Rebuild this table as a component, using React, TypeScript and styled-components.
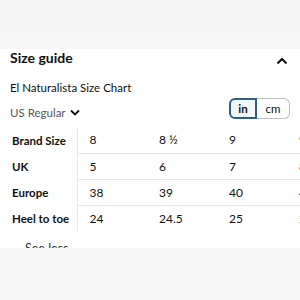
import styled, { createGlobalStyle } from "styled-components";

const GlobalStyle = createGlobalStyle`
  html, body {
    margin: 0;
    padding: 0;
    background: #f6f6f6;
  }
  body {
    font-family: Lato, "Liberation Sans", Arial, sans-serif;
    color: #0f1111;
  }
`;

const Page = styled.div`
  width: 300px;
  height: 300px;
  display: flex;
  flex-direction: column;
  background: #f6f6f6;
  overflow: hidden;
`;

const TopShade = styled.div`
  height: 49px;
  flex-shrink: 0;
  background: linear-gradient(#f4f4f4, #f7f7f7);
`;

const Sheet = styled.div`
  height: 199px;
  flex-shrink: 0;
  background: #ffffff;
  overflow: hidden;
`;

const BottomShade = styled.div`
  flex: 1;
  background: #f7f7f8;
`;

const Header = styled.div`
  display: flex;
  align-items: center;
  justify-content: space-between;
  padding: 0 12px 0 10px;
  height: 18px;
`;

const Title = styled.h2`
  margin: 0;
  font-size: 14px;
  font-weight: 700;
  line-height: 18px;
`;

const ChevronUp = styled.svg`
  width: 12px;
  height: 8px;
  margin-top: 6px;
`;

const Subtitle = styled.div`
  padding: 0 10px;
  margin-top: 13px;
  font-size: 11.5px;
  line-height: 16px;
  color: #0f1111;
`;

const ControlsRow = styled.div`
  display: flex;
  align-items: center;
  justify-content: space-between;
  padding: 0 10px;
  margin-top: 1px;
`;

const RegionSelect = styled.div`
  display: flex;
  align-items: center;
  gap: 4px;
  margin-top: 9px;
  font-size: 11.5px;
  color: #565959;
`;

const Toggle = styled.div`
  display: flex;
  height: 21px;
`;

const ToggleButton = styled.div<{ $active?: boolean; $side: "left" | "right" }>`
  display: flex;
  align-items: center;
  justify-content: center;
  width: ${(p) => (p.$side === "left" ? "28px" : "33px")};
  box-sizing: border-box;
  font-size: 11.5px;
  font-weight: ${(p) => (p.$active ? 700 : 400)};
  color: #0f1111;
  background: ${(p) => (p.$active ? "#f0f8fa" : "#ffffff")};
  border: ${(p) => (p.$active ? "2px solid #2f5d83" : "1px solid #bbbfbf")};
  border-left-width: ${(p) => (p.$side === "right" ? "0" : undefined)};
  border-radius: ${(p) => (p.$side === "left" ? "6px 0 0 6px" : "0 6px 6px 0")};
`;

const TableWrap = styled.div`
  margin-top: 8px;
  overflow: hidden;
`;

const Table = styled.table`
  border-collapse: collapse;
  table-layout: fixed;
  font-size: 12px;
`;

const LabelCell = styled.th`
  width: 77px;
  min-width: 77px;
  box-sizing: border-box;
  height: 26px;
  padding: 0 0 0 12px;
  text-align: left;
  font-size: 11.5px;
  font-weight: 700;
  white-space: nowrap;
  border-right: 1px solid #e6e6e6;
  box-shadow: 2px 0 2px -1px rgba(0, 0, 0, 0.04);
`;

const ValueCell = styled.td<{ $last?: boolean }>`
  width: 70px;
  min-width: 70px;
  box-sizing: border-box;
  height: 26px;
  padding: 0 0 0 12px;
  white-space: nowrap;
  border-bottom: ${(p) => (p.$last ? "none" : "1px solid #e7e7e7")};
`;

const SeeLess = styled.div`
  display: flex;
  align-items: center;
  gap: 6px;
  margin-top: 10px;
  padding-left: 13px;
  font-size: 12.5px;
  line-height: 16px;
  color: #333;
`;

const rows = [
  { label: "Brand Size", values: ["8", "8 ½", "9", "9 ½"] },
  { label: "UK", values: ["5", "6", "7", "8"] },
  { label: "Europe", values: ["38", "39", "40", "41"] },
  { label: "Heel to toe", values: ["24", "24.5", "25", "25.5"] },
];

export default function App() {
  return (
    <>
      <GlobalStyle />
      <Page>
        <TopShade />
        <Sheet>
          <Header>
            <Title>Size guide</Title>
            <ChevronUp viewBox="0 0 12 8">
              <path d="M1.5 6.5 L6 2 L10.5 6.5" fill="none" stroke="#0f1111" strokeWidth="2" />
            </ChevronUp>
          </Header>
          <Subtitle>El Naturalista Size Chart</Subtitle>
          <ControlsRow>
            <RegionSelect>
              US Regular
              <svg width="10" height="7" viewBox="0 0 10 7">
                <path d="M1 1.5 L5 5.5 L9 1.5" fill="none" stroke="#0f1111" strokeWidth="1.8" />
              </svg>
            </RegionSelect>
            <Toggle>
              <ToggleButton $active $side="left">in</ToggleButton>
              <ToggleButton $side="right">cm</ToggleButton>
            </Toggle>
          </ControlsRow>
          <TableWrap>
            <Table>
              <tbody>
                {rows.map((row, i) => (
                  <tr key={row.label}>
                    <LabelCell>{row.label}</LabelCell>
                    {row.values.map((v) => (
                      <ValueCell key={v} $last={i === rows.length - 1}>
                        {v}
                      </ValueCell>
                    ))}
                  </tr>
                ))}
              </tbody>
            </Table>
          </TableWrap>
          <SeeLess>
            <svg width="6" height="8" viewBox="0 0 6 8">
              <path d="M1 7 L3 5 L5 7" fill="none" stroke="#2162a1" strokeWidth="1.5" />
            </svg>
            See less
          </SeeLess>
        </Sheet>
        <BottomShade />
      </Page>
    </>
  );
}
